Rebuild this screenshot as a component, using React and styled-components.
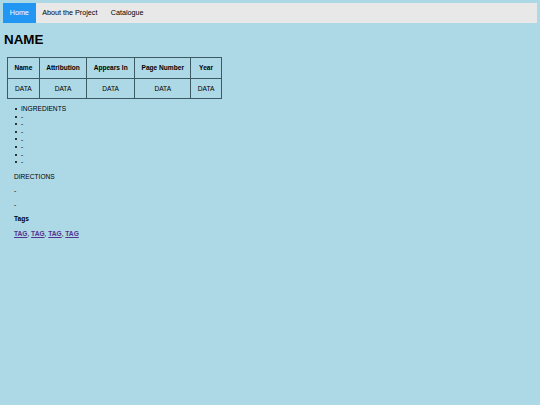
import styled, { createGlobalStyle } from "styled-components";

const Global = createGlobalStyle`
  html, body {
    margin: 0;
    background: #add8e6;
  }
  body {
    padding: 3px;
    font-family: "Liberation Sans", Arial, sans-serif;
    color: #000;
    font-size: 6.6px;
    line-height: 7.6px;
  }
`

const Nav = styled.nav`
  display: flex;
  height: 20px;
  background: #e8e8e8;
`

const NavLink = styled.a`
  display: flex;
  align-items: center;
  padding: 0 6.7px;
  font-size: 7.2px;
  color: ${p => (p.$active ? "#fff" : "#000")};
  background: ${p => (p.$active ? "#2196f3" : "transparent")};
  text-decoration: none;
`

const Title = styled.h1`
  font-size: 13.4px;
  line-height: 15px;
  font-weight: bold;
  margin: 9px 1px 10px;
`

const Table = styled.table`
  border-collapse: collapse;
  margin-left: 4px;
`

const Th = styled.th`
  border: 1px solid #3d5963;
  padding: 6.2px 6.4px;
  font-weight: bold;
  text-align: center;
`

const Td = styled.td`
  border: 1px solid #3d5963;
  padding: 5.8px 6.4px;
  text-align: center;
`

const Body = styled.div`
  padding-left: 11px;
`

const List = styled.ul`
  margin: 6px 0 0;
  padding: 0;
  list-style: none;
`

const Item = styled.li`
  display: flex;
  align-items: center;

  &::before {
    content: "";
    width: 2px;
    height: 2px;
    margin: 0 4.5px 0 0.5px;
    border-radius: 50%;
    background: #000;
  }
`

const P = styled.p`
  margin: 6.7px 0;
`

const Label = styled.p`
  margin: 6.7px 0;
  font-weight: bold;
`

const Tag = styled.a`
  color: #55318f;
  font-weight: bold;
  text-decoration: underline;
`

const headers = ["Name", "Attribution", "Appears In", "Page Number", "Year"];
const tags = ["TAG", "TAG", "TAG", "TAG"];

const App = () => {
  return (
    <>
      <Global />
      <Nav>
        <NavLink $active href="#">Home</NavLink>
        <NavLink href="#">About the Project</NavLink>
        <NavLink href="#">Catalogue</NavLink>
      </Nav>
      <Title>NAME</Title>
      <Table>
        <thead>
          <tr>
            {headers.map(h => <Th key={h}>{h}</Th>)}
          </tr>
        </thead>
        <tbody>
          <tr>
            {headers.map(h => <Td key={h}>DATA</Td>)}
          </tr>
        </tbody>
      </Table>
      <Body>
        <List>
          <Item>INGREDIENTS</Item>
          {[1, 2, 3, 4, 5, 6, 7].map(i => <Item key={i}>-</Item>)}
        </List>
        <P>DIRECTIONS</P>
        <P>-</P>
        <P>-</P>
        <Label>Tags</Label>
        <P>
          {tags.map((t, i) => (
            <span key={i}>
              <Tag href="#">{t}</Tag>
              {i < tags.length - 1 ? ", " : ""}
            </span>
          ))}
        </P>
      </Body>
    </>
  )
}

export default App;
